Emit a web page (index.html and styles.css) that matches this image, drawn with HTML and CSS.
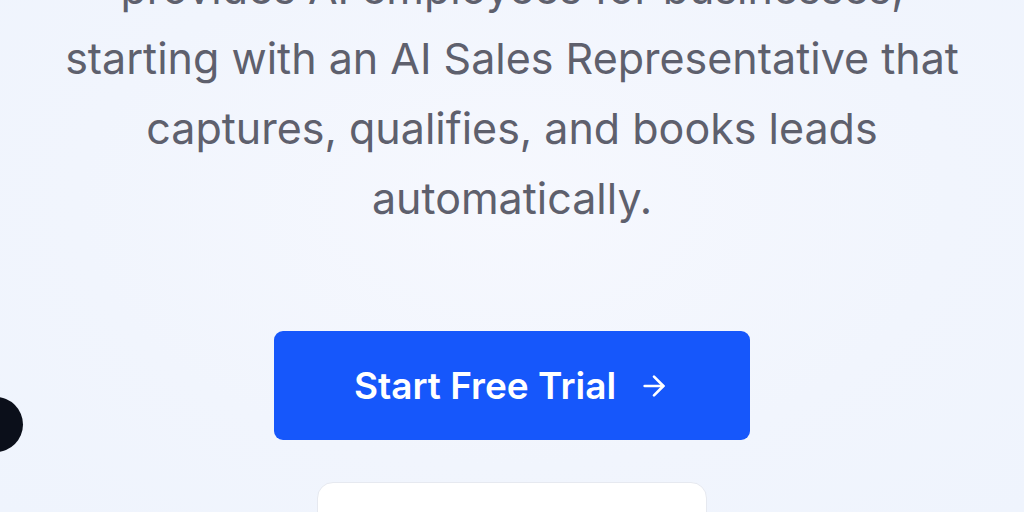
FILE: index.html
```html
<!DOCTYPE html>
<html lang="en">
<head>
  <meta charset="UTF-8" />
  <meta name="viewport" content="width=device-width, initial-scale=1.0" />
  <title>AI Employees</title>
  <link rel="stylesheet" href="styles.css">
</head>
<body>
  <div class="hero">
    <p class="lead">provides AI employees for businesses, starting with an AI Sales Representative that captures, qualifies, and books leads automatically.</p>

    <div class="actions">
      <a class="btn-primary" href="#">
        <span>Start Free Trial</span>
        <svg class="arrow" viewBox="0 0 24 24" fill="none" stroke="currentColor" stroke-width="2" stroke-linecap="round" stroke-linejoin="round">
          <path d="M5 12h14"></path>
          <path d="m12 5 7 7-7 7"></path>
        </svg>
      </a>
      <div class="demo-card"></div>
    </div>
  </div>

  <div class="chat-dot"></div>
</body>
</html>
```

FILE: styles.css
```css
html, body {
  margin: 0;
  padding: 0;
  height: 100%;
  overflow: hidden;
}
body {
  background: radial-gradient(ellipse at 50% 40%, #f6f8fe 0%, #f1f5fd 60%, #eff4fd 100%);
  font-family: Inter, "Noto Sans", sans-serif;
}
.hero {
  display: flex;
  flex-direction: column;
  align-items: center;
}
.lead {
  width: 910px;
  margin: -47px 0 0 0;
  font-size: 43px;
  line-height: 70px;
  color: #5e606d;
  text-align: center;
}
.actions {
  display: flex;
  flex-direction: column;
  align-items: center;
  margin-top: 98px;
  gap: 42px;
}
.btn-primary {
  display: flex;
  align-items: center;
  justify-content: center;
  gap: 22px;
  width: 476px;
  height: 109px;
  box-sizing: border-box;
  background-color: #1657fb;
  color: #fff;
  border-radius: 9px;
  text-decoration: none;
  font-size: 37px;
  font-weight: 600;
}
.arrow {
  width: 32px;
  height: 32px;
}
.demo-card {
  width: 388px;
  height: 80px;
  background: #fff;
  border: 1px solid #e6e9f0;
  border-radius: 16px;
}
.chat-dot {
  position: absolute;
  left: -32px;
  top: 397px;
  width: 55px;
  height: 55px;
  border-radius: 50%;
  background: #0b0f1a;
}
```
